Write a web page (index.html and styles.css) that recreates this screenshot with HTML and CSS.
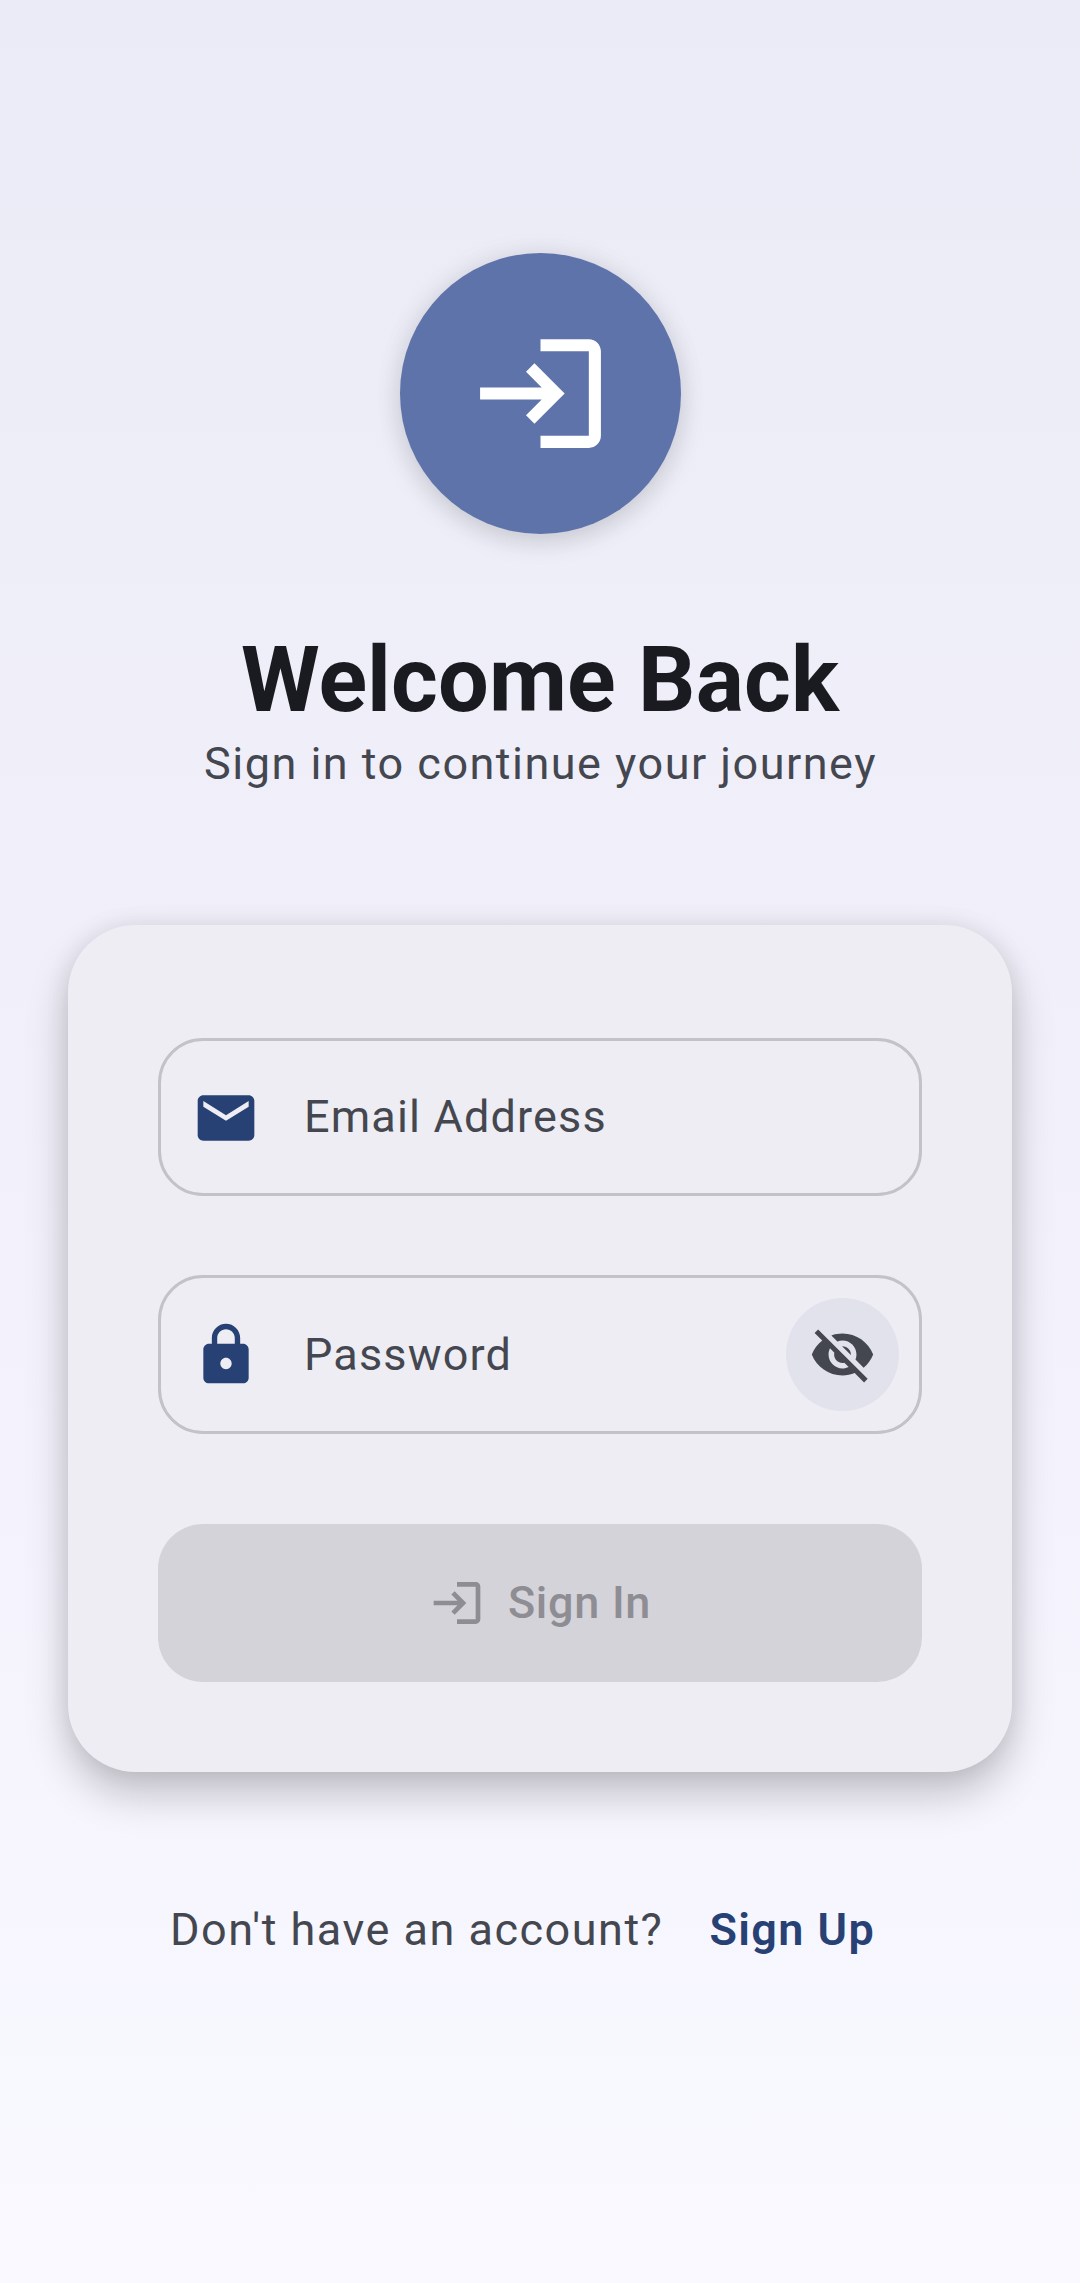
FILE: index.html
```html
<!DOCTYPE html>
<html lang="en">
<head>
<meta charset="utf-8">
<title>Sign In</title>
<link rel="stylesheet" href="styles.css">
</head>
<body>
<main class="screen">
  <div class="logo">
    <svg class="logo-icon" viewBox="0 0 24 24"><path d="M11,7L9.6,8.4l2.6,2.6H2v2h10.2l-2.6,2.6L11,17l5,-5L11,7zM20,19h-8v2h8c1.1,0 2,-0.9 2,-2V5c0,-1.1 -0.9,-2 -2,-2h-8v2h8V19z"/></svg>
  </div>
  <h1 class="title">Welcome Back</h1>
  <p class="subtitle">Sign in to continue your journey</p>
  <form class="card">
    <div class="field">
      <svg class="field-icon" viewBox="0 0 24 24"><path d="M20,4H4C2.9,4 2.01,4.9 2.01,6L2,18c0,1.1 0.9,2 2,2h16c1.1,0 2,-0.9 2,-2V6C22,4.9 21.1,4 20,4zM20,8l-8,5L4,8V6l8,5l8,-5V8z"/></svg>
      <span class="label">Email Address</span>
    </div>
    <div class="field password">
      <svg class="field-icon" viewBox="0 0 24 24"><path d="M18,8h-1V6c0,-2.76 -2.24,-5 -5,-5S7,3.24 7,6v2H6c-1.1,0 -2,0.9 -2,2v10c0,1.1 0.9,2 2,2h12c1.1,0 2,-0.9 2,-2V10C20,8.9 19.1,8 18,8zM12,17c-1.1,0 -2,-0.9 -2,-2s0.9,-2 2,-2s2,0.9 2,2S13.1,17 12,17zM15.1,8H8.9V6c0,-1.71 1.39,-3.1 3.1,-3.1s3.1,1.39 3.1,3.1V8z"/></svg>
      <span class="label">Password</span>
      <span class="toggle">
        <svg class="toggle-icon" viewBox="0 0 24 24"><path d="M12,7c2.76,0 5,2.24 5,5c0,0.65 -0.13,1.26 -0.36,1.83l2.92,2.92c1.51,-1.26 2.7,-2.89 3.43,-4.75c-1.73,-4.39 -6,-7.5 -11,-7.5c-1.4,0 -2.74,0.25 -3.98,0.7l2.16,2.16C10.74,7.13 11.35,7 12,7zM2,4.27l2.28,2.28l0.46,0.46C3.08,8.3 1.78,10.02 1,12c1.73,4.39 6,7.5 11,7.5c1.55,0 3.03,-0.3 4.38,-0.84l0.42,0.42L19.73,22L21,20.73L3.27,3L2,4.27zM7.53,9.8l1.55,1.55C9.03,11.56 9,11.78 9,12c0,1.66 1.34,3 3,3c0.22,0 0.44,-0.03 0.65,-0.08l1.55,1.55C13.53,16.8 12.79,17 12,17c-2.76,0 -5,-2.24 -5,-5C7,11.21 7.2,10.47 7.53,9.8zM11.84,9.02l3.15,3.15l0.02,-0.16c0,-1.66 -1.34,-3 -3,-3L11.84,9.02z"/></svg>
      </span>
    </div>
    <div class="button">
      <svg class="button-icon" viewBox="0 0 24 24"><path d="M11,7L9.6,8.4l2.6,2.6H2v2h10.2l-2.6,2.6L11,17l5,-5L11,7zM20,19h-8v2h8c1.1,0 2,-0.9 2,-2V5c0,-1.1 -0.9,-2 -2,-2h-8v2h8V19z"/></svg>
      <span class="button-text">Sign In</span>
    </div>
  </form>
  <p class="footer"><span>Don't have an account?</span><a class="link">Sign Up</a></p>
</main>
</body>
</html>
```
FILE: styles.css
```css
* { box-sizing: border-box; margin: 0; }
body { font-family: Roboto, sans-serif; }
.screen {
  width: 1080px;
  height: 2283px;
  padding-top: 253px;
  display: flex;
  flex-direction: column;
  align-items: center;
  background: linear-gradient(#eaebf6, #f1f0fa 42%, #f4f3fd 66%, #f9f9ff);
  color: #44474f;
  font-size: 45px;
  line-height: 67px;
}
svg { display: block; fill: currentColor; flex: none; }
.logo {
  width: 281px;
  height: 281px;
  border-radius: 50%;
  background: #5e73aa;
  color: #fff;
  display: flex;
  align-items: center;
  justify-content: center;
  box-shadow: 0 8px 26px rgba(0, 0, 0, 0.13), 0 0 30px rgba(0, 0, 0, 0.06);
}
.logo-icon { width: 145px; height: 145px; }
.title {
  margin-top: 91px;
  font-size: 90px;
  line-height: 112px;
  font-weight: 700;
  letter-spacing: 0.1px;
  color: #1a1b20;
}
.subtitle { margin-top: -7px; padding-left: 1px; letter-spacing: 1.48px; }
.card {
  width: 944px;
  height: 847px;
  margin-top: 128px;
  padding: 113px 90px 90px;
  border-radius: 67.5px;
  background: #ededf3;
  display: flex;
  flex-direction: column;
  box-shadow: 0 22px 42px rgba(0, 0, 0, 0.22), 0 0 24px rgba(0, 0, 0, 0.08);
}
.field {
  height: 158px;
  margin-bottom: 79px;
  padding: 0 20px 0 31px;
  border: 3px solid #c2c2c8;
  border-radius: 45px;
  display: flex;
  align-items: center;
}
.password { height: 159px; }
.field-icon { width: 68px; height: 68px; margin-top: 2px; color: #284174; }
.password .field-icon { margin-top: 1px; }
.label { margin: -2px 0 0 44px; letter-spacing: 1.15px; }
.password .label { margin-top: -1px; }
.toggle {
  width: 113px;
  height: 113px;
  margin-left: auto;
  border-radius: 50%;
  background: #e1e2ec;
  display: flex;
  align-items: center;
  justify-content: center;
}
.toggle-icon { width: 67px; height: 67px; }
.button {
  height: 158px;
  margin-top: 11px;
  border-radius: 45px;
  background: #d4d3d9;
  color: #8e8d93;
  display: flex;
  align-items: center;
  justify-content: center;
  gap: 23px;
  font-weight: 500;
  letter-spacing: 0.7px;
}
.button-icon { width: 56px; height: 56px; }
.button-text { margin-top: -2px; }
.footer {
  width: 740px;
  margin-top: 124px;
  display: flex;
  gap: 46px;
  letter-spacing: 1.5px;
}
.link { font-weight: 600; letter-spacing: 1.4px; color: #284174; }
```
